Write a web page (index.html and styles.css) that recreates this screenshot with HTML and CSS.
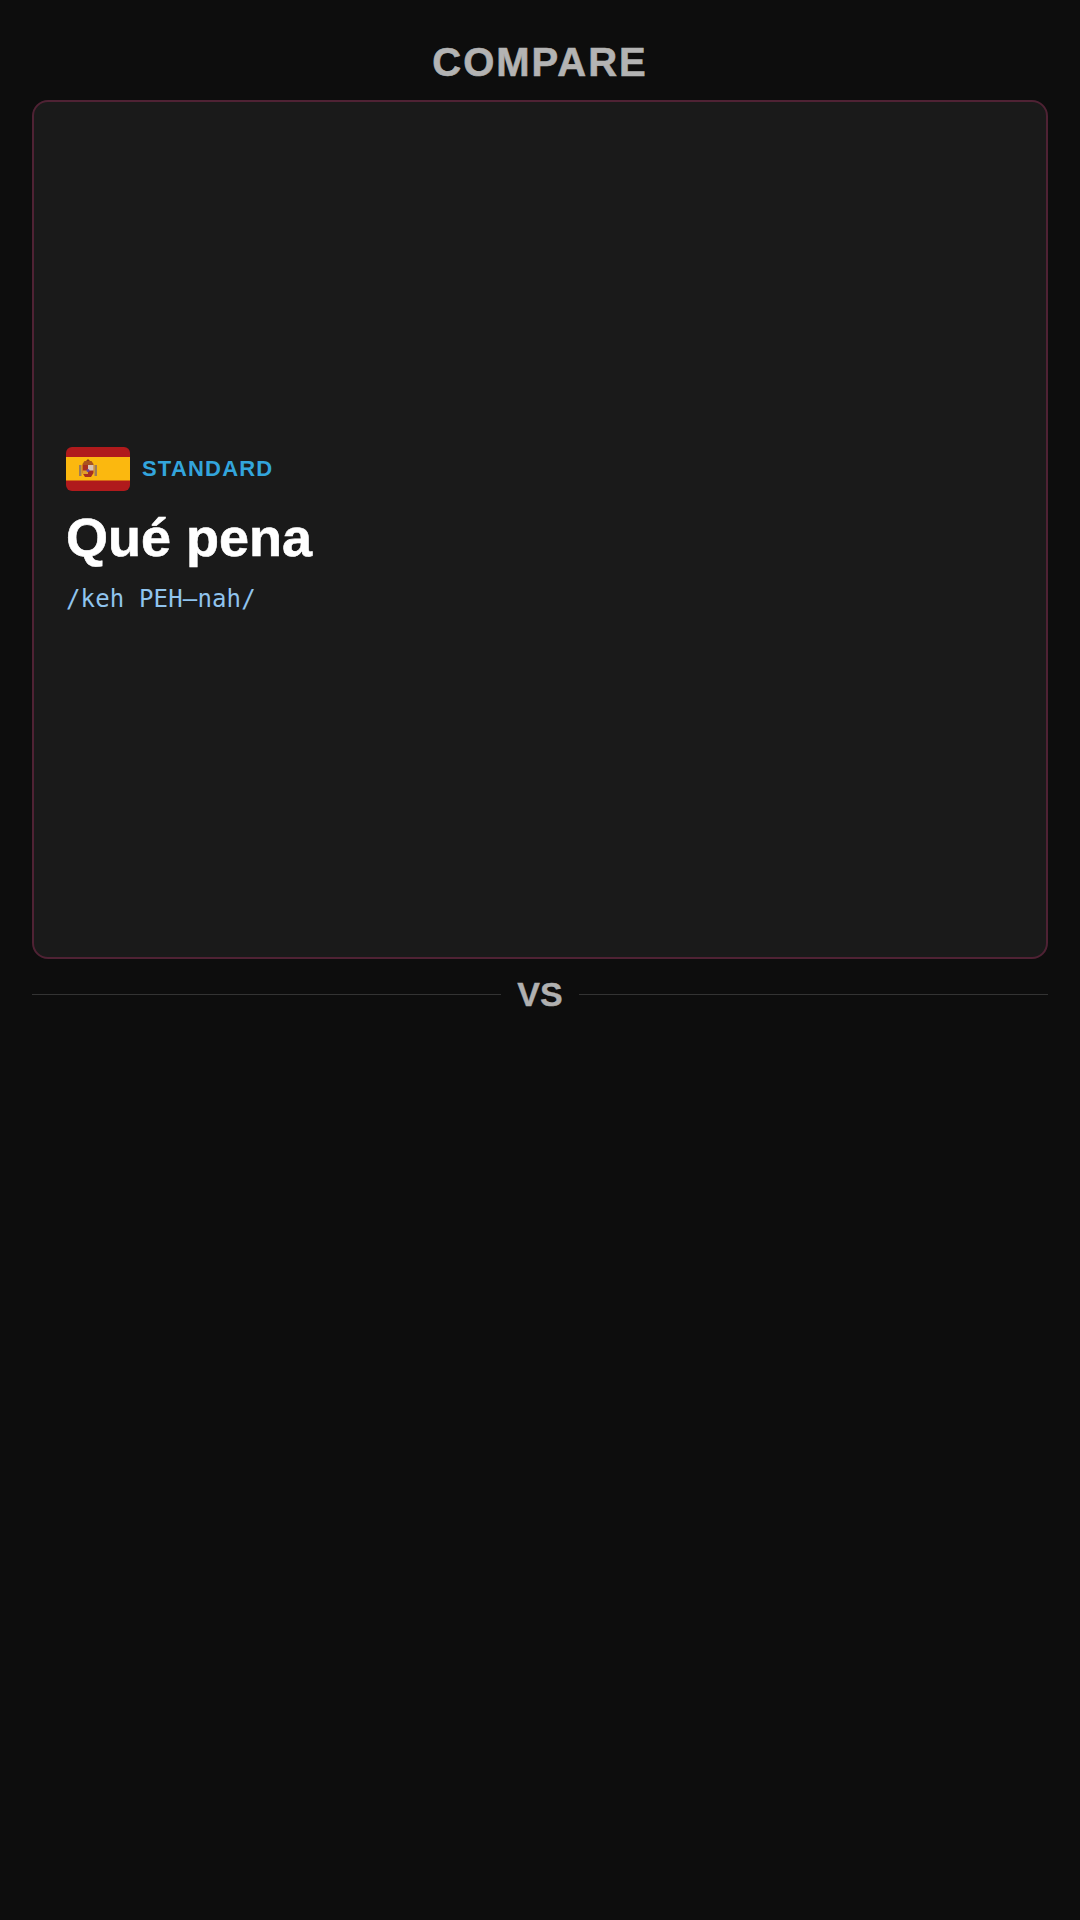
FILE: index.html
```html
<html>
  <head>
    <title>Compare</title>
    <meta name="viewport" content="width=device-width, initial-scale=1.0">
    <link rel="stylesheet" href="styles.css">
  </head>
  <body>
    <h1 class="title">COMPARE</h1>
    <div class="card">
      <div class="variant">
        <svg class="flag" viewBox="0 0 64 44">
          <rect width="64" height="44" fill="#b01a1c"/>
          <rect y="10" width="64" height="23.500" fill="#fbb80f"/>
          <path d="M13 18h2.500v11h-2.500zM28.500 18h2.500v11h-2.500z" fill="#9c7a5a"/>
          <path d="M16.500 17l2-3h7l2 3v1h-11z" fill="#a9541f"/>
          <path d="M16.500 18h11v8l-2.500 4h-6l-2.500-4z" fill="#a8301f"/>
          <rect x="22" y="18" width="5.500" height="5.500" fill="#d8c4b4"/>
          <rect x="16.500" y="23.500" width="5.500" height="3.500" fill="#e0a02a"/>
          <circle cx="22" cy="23.500" r="1.500" fill="#6a4aa0"/>
          <path d="M20 14l2-2 2 2z" fill="#8a3a1a"/>
        </svg>
        <span class="variant-name">STANDARD</span>
      </div>
      <div class="phrase">Qué pena</div>
      <div class="phonetic">/keh PEH–nah/</div>
    </div>
    <div class="divider">
      <div class="line"></div>
      <span class="vs">VS</span>
      <div class="line"></div>
    </div>
  </body>
</html>
```

FILE: styles.css
```css
html, body {
  height: 100%;
}
body {
  background-color: #0d0d0d;
  font-family: "Liberation Sans", Arial, sans-serif;
  margin: 0;
  padding: 0 32px;
  box-sizing: border-box;
}
.title {
  color: #b3b3b3;
  font-size: 40px;
  font-weight: bold;
  letter-spacing: 2px;
  line-height: 46px;
  margin: 0;
  padding-top: 39px;
  height: 61px;
  text-align: center;
  -webkit-text-stroke: 0.6px #b3b3b3;
}
.card {
  background-color: #1a1a1a;
  border: 2px solid #4f2234;
  border-radius: 16px;
  box-sizing: border-box;
  display: flex;
  flex-direction: column;
  justify-content: center;
  height: 859px;
  padding: 2px 32px 0;
}
.variant {
  align-items: center;
  display: flex;
  gap: 12px;
}
.flag {
  border-radius: 6px;
  display: block;
  height: 44px;
  width: 64px;
}
.variant-name {
  color: #33a5dc;
  font-size: 22px;
  font-weight: bold;
  letter-spacing: 1.2px;
}
.phrase {
  color: #fff;
  font-size: 54px;
  font-weight: bold;
  line-height: 64px;
  margin-top: 14px;
  -webkit-text-stroke: 0.6px #fff;
}
.phonetic {
  color: #90c4ee;
  font-family: "DejaVu Sans Mono", monospace;
  font-size: 24px;
  letter-spacing: 0.15px;
  line-height: 32px;
  margin-top: 14px;
}
.divider {
  align-items: center;
  display: flex;
  gap: 16px;
  margin-top: 15px;
}
.line {
  background-color: #333;
  flex: 1;
  height: 1px;
}
.vs {
  color: #b0b0b0;
  font-size: 34px;
  font-weight: bold;
  line-height: 40px;
  -webkit-text-stroke: 0.4px #b0b0b0;
}
```
